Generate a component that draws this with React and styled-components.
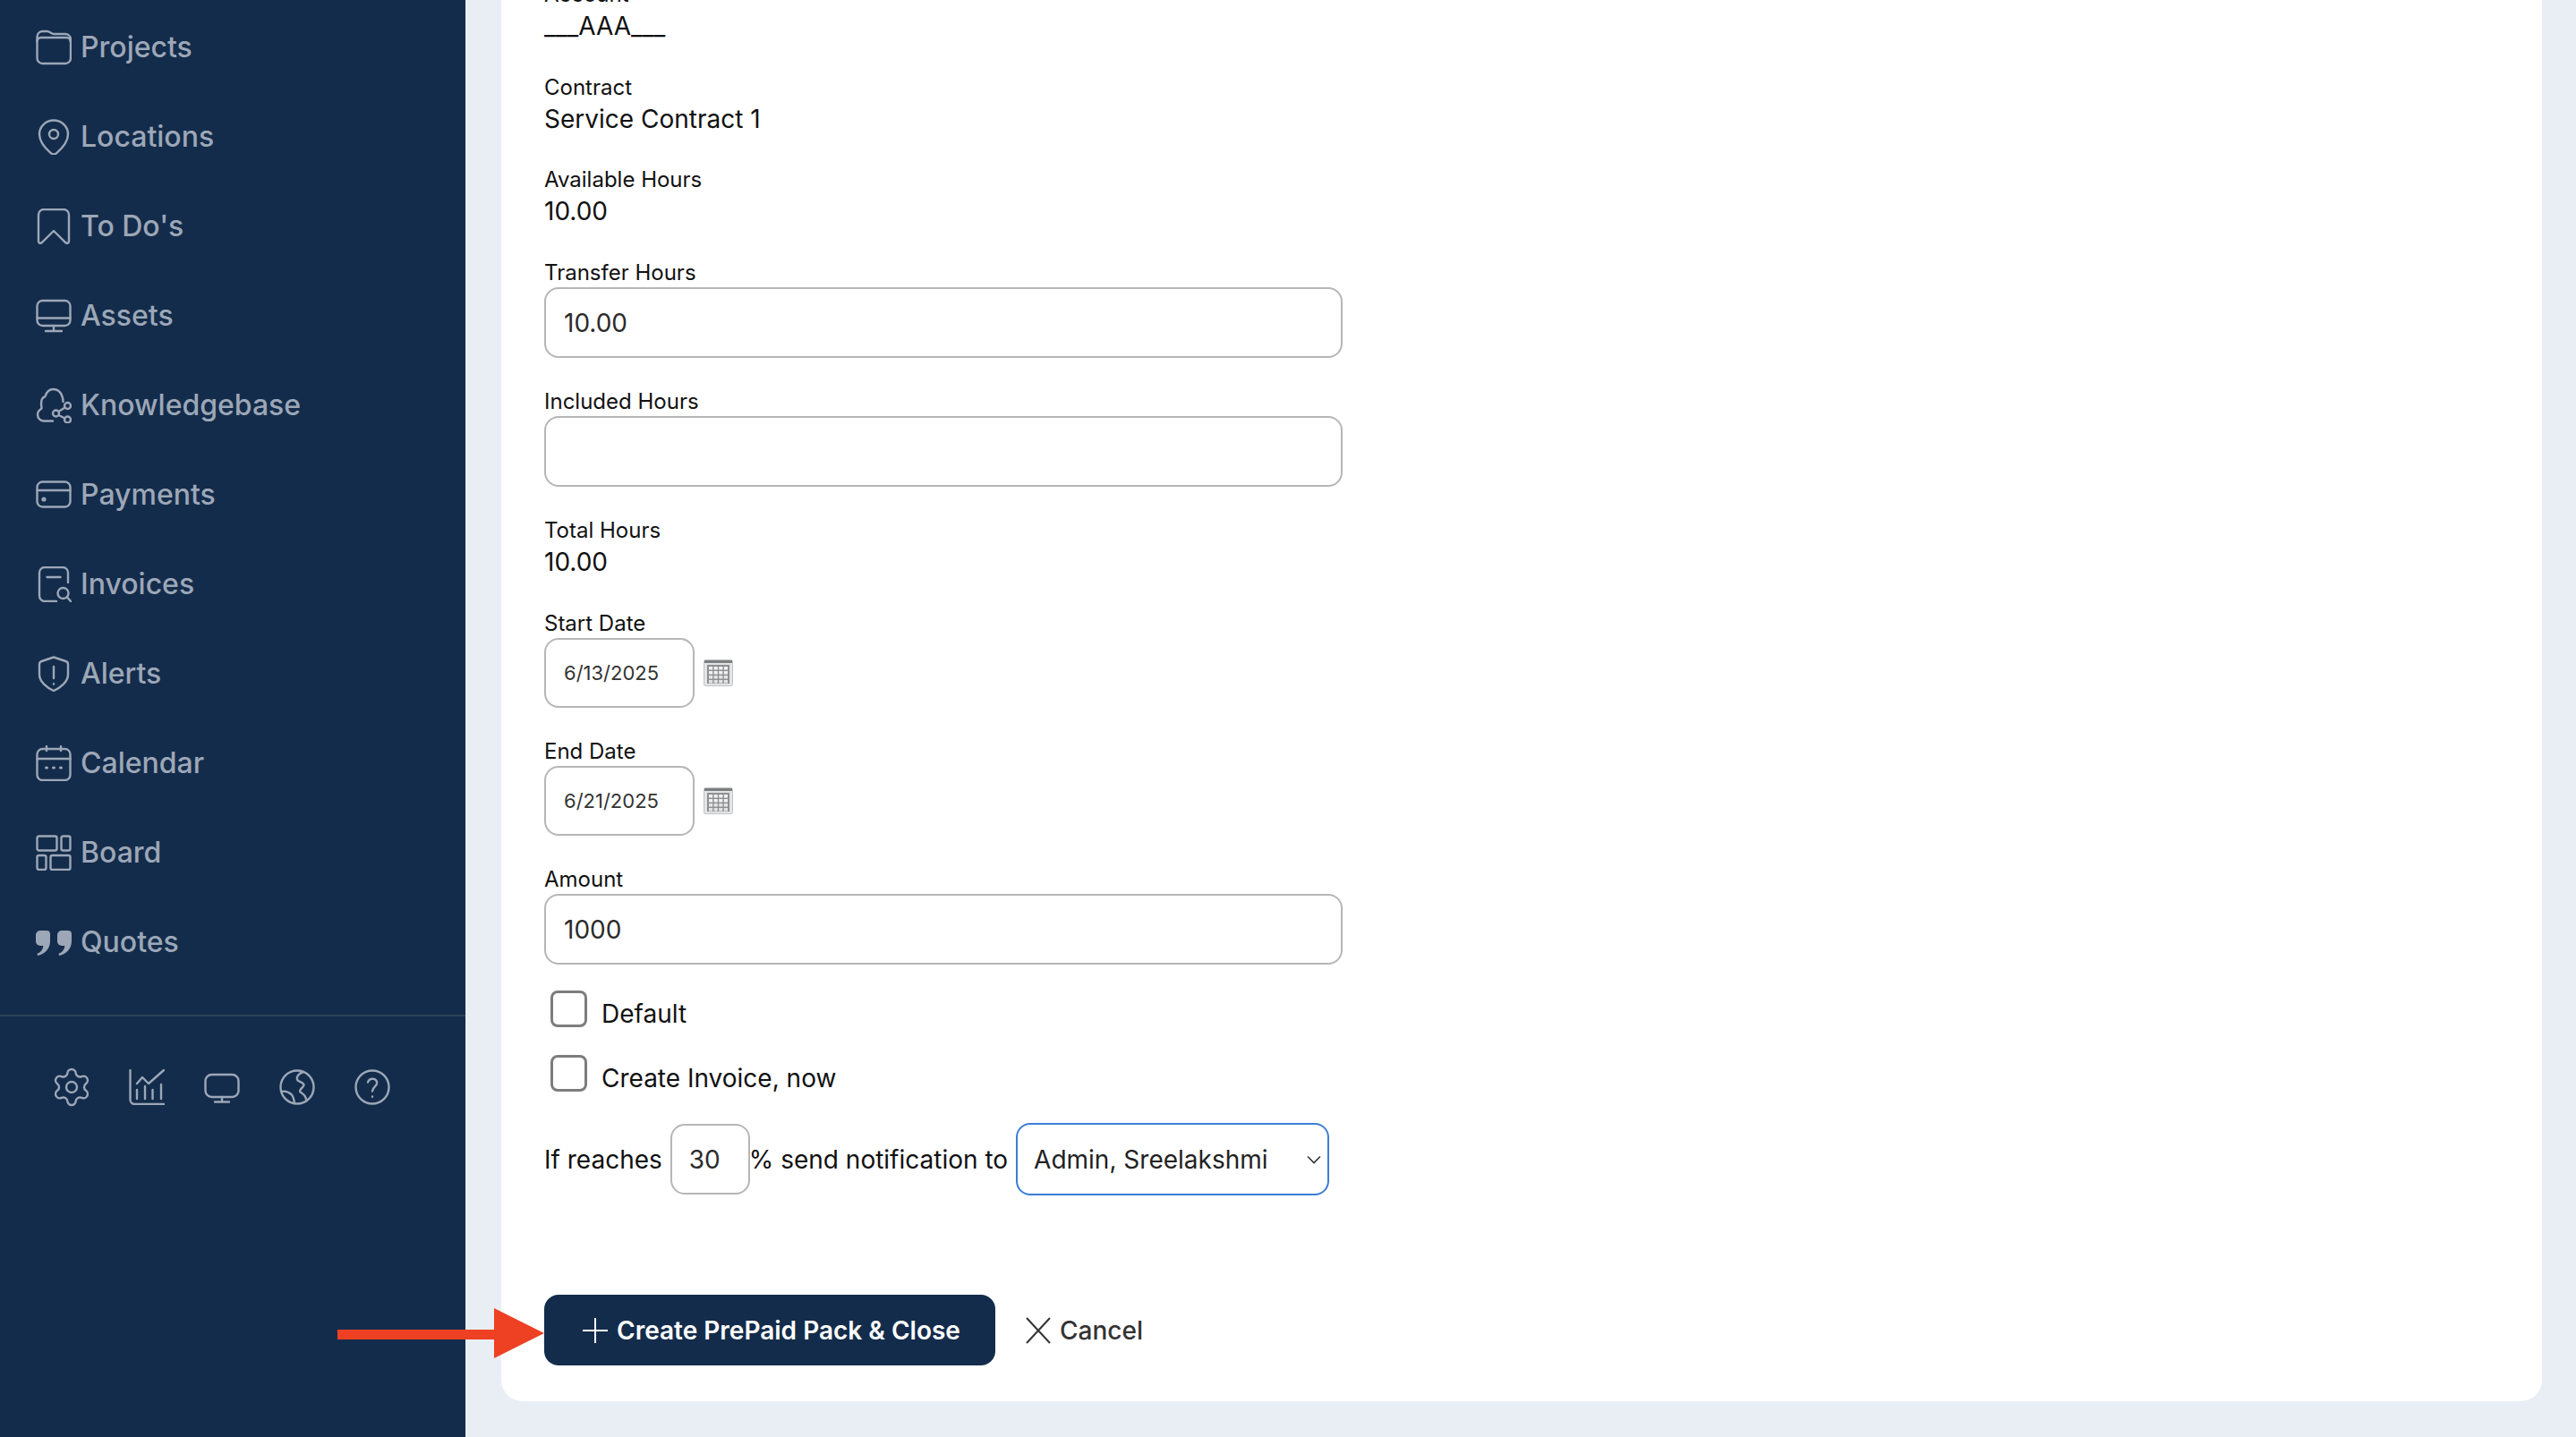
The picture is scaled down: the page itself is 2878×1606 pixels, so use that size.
import React from "react";
import styled, { createGlobalStyle } from "styled-components";
import { Settings } from "lucide-react";

const Global = createGlobalStyle`
  html, body { margin: 0; padding: 0; background: #e9eef5; }
  * { box-sizing: border-box; }
  body { font-family: Inter, "Liberation Sans", sans-serif; color: #111; }
`;

const Shell = styled.div`
  display: flex;
  height: 1606px;
  overflow: hidden;
  position: relative;
`;
const Sidebar = styled.aside`
  flex: 0 0 520px;
  background: #142c4b;
  color: #9ca7b7;
  padding-top: 3px;
`;
const NavList = styled.nav`
  display: flex;
  flex-direction: column;
  border-bottom: 2px solid #2a4159;
  padding-bottom: 31px;
`;
const NavItem = styled.a`
  display: flex;
  align-items: center;
  gap: 10px;
  height: 100px;
  padding-left: 40px;
  font-size: 32px;
  font-weight: 500;
  span { position: relative; top: -1px; }
`;
const IconSvg = styled.svg.attrs({ viewBox: "0 0 40 40", fill: "none" })`
  width: 40px;
  height: 40px;
  flex: none;
  stroke: currentColor;
  stroke-width: 2.4;
  stroke-linecap: round;
  stroke-linejoin: round;
`;
const GearIcon = styled(Settings)`
  margin: -4px;
  flex: none;
`;
const ToolBar = styled.div`
  display: flex;
  gap: 44px;
  padding: 59px 0 0 60px;
`;
const Main = styled.main`
  flex: 1;
  min-width: 0;
  display: flex;
  flex-direction: column;
  justify-content: flex-end;
  padding: 0 38px 40px 40px;
`;
const Card = styled.section`
  flex: none;
  background: #fff;
  border-radius: 0 0 24px 24px;
  padding: 0 48px 40px;
`;
const Field = styled.div`
  margin-bottom: ${(p) => p.$gap ?? 32}px;
`;
const Label = styled.label`
  display: block;
  height: 32px;
  line-height: 33px;
  font-size: 24px;
  margin-bottom: ${(p) => (p.$control ? 1 : 0)}px;
`;
const Value = styled.div`
  height: 40px;
  line-height: 41px;
  font-size: 28px;
`;
const TextInput = styled.input`
  display: block;
  width: 892px;
  height: 79px;
  padding: 0 20px;
  border: 2px solid #b6b6b6;
  border-radius: 16px;
  background: #fff;
  font: 400 28px Inter, sans-serif;
  color: #2b2b2b;
  outline: none;
`;
const DateRow = styled.div`
  display: flex;
  align-items: center;
  gap: 10px;
`;
const DateInput = styled(TextInput)`
  width: 168px;
  height: 78px;
  font-size: 22px;
  color: #333;
`;
const CalendarSvg = styled.svg.attrs({ viewBox: "0 0 33 30" })`
  width: 33px;
  height: 30px;
  flex: none;
`;
const CheckRow = styled.label`
  display: flex;
  align-items: center;
  gap: 16px;
  height: 41px;
  padding-left: 7px;
  margin-top: ${(p) => p.$top}px;
  font-size: 28px;
  span { padding-top: 11px; }
`;
const Check = styled.input.attrs({ type: "checkbox" })`
  appearance: none;
  margin: 0;
  width: 41px;
  height: 41px;
  border: 3px solid #7d7d7d;
  border-radius: 8px;
  background: #fff;
`;
const NotifyRow = styled.div`
  display: flex;
  align-items: center;
  gap: 9px;
  margin-top: 35px;
  font-size: 28px;
  height: 81px;
`;
const NumInput = styled(TextInput)`
  width: 89px;
  padding: 0 19px;
  margin-right: -10px;
`;
const SelectWrap = styled.div`
  position: relative;
  width: 350px;
  height: 81px;
`;
const Select = styled.select`
  appearance: none;
  width: 100%;
  height: 100%;
  border: 2.5px solid #3b7dd8;
  border-radius: 16px;
  padding: 0 40px 0 18px;
  background: #fff;
  font: 400 28px Inter, sans-serif;
  color: #222;
  outline: none;
`;
const Chevron = styled.svg.attrs({ viewBox: "0 0 16 10", fill: "none" })`
  position: absolute;
  right: 9px;
  top: 36px;
  width: 16px;
  height: 10px;
  stroke: #333;
  stroke-width: 1.6;
`;
const Actions = styled.div`
  display: flex;
  align-items: center;
  gap: 33px;
  margin-top: 111px;
`;
const PrimaryButton = styled.button`
  display: flex;
  align-items: center;
  gap: 9px;
  width: 504px;
  height: 79px;
  padding: 0 0 0 42px;
  border: 0;
  border-radius: 16px;
  background: #142c4b;
  color: #fff;
  font: 570 28px Inter, sans-serif;
`;
const GhostButton = styled.button`
  display: flex;
  align-items: center;
  gap: 9px;
  padding: 0;
  border: 0;
  background: none;
  color: #333;
  font: 500 28px Inter, sans-serif;
`;
const ThinSvg = styled.svg.attrs({ viewBox: "0 0 30 30", fill: "none" })`
  width: 30px;
  height: 30px;
  flex: none;
  stroke: currentColor;
  stroke-width: 2;
`;
const ArrowSvg = styled.svg.attrs({ viewBox: "0 0 231 56" })`
  position: absolute;
  left: 377px;
  top: 1462px;
  width: 231px;
  height: 56px;
`;

const icons = {
  folder: (
    <>
      <path d="M1.5 32V8a6 6 0 0 1 6-6h5c3.500 0 4.500 3 7.500 3h13a6 6 0 0 1 6 6v21a6 6 0 0 1-6 6H7.500a6 6 0 0 1-6-6z" />
      <path d="M1.500 13a4 4 0 0 1 4-4h29a4 4 0 0 1 4 4" />
    </>
  ),
  pin: (
    <>
      <path d="M20 1.500c9 0 16 7 16 15.500 0 8-7 16-12.500 20.800a5 5 0 0 1-7 0C11 33 4 25 4 17 4 8.500 11 1.500 20 1.500z" />
      <circle cx="20" cy="17" r="5" />
    </>
  ),
  bookmark: <path d="M3 7a6 6 0 0 1 6-6h22a6 6 0 0 1 6 6v29.500c0 2-2 3-3.500 1.800L20 25 6.500 38.300C5 39.500 3 38.500 3 36.500z" />,
  monitor: (
    <>
      <rect x="1.500" y="3" width="37" height="28" rx="6" />
      <path d="M1.500 22.500h37M20 31v6M11 37h18" />
    </>
  ),
  knowledge: (
    <>
      <path d="M19 37.500H9.500C5 37.500 2 34 2 30.500c0-3.500 2-5.500 4.500-7C6 21 5.500 18 6.500 14c.8-2.500 2.500-3.500 4-4C12 5 15 2 19.500 2c5.500 0 8.500 3.500 10 8 1 3 1 4.500 1 6" />
      <circle cx="22.500" cy="29" r="3.500" />
      <circle cx="35.500" cy="20.500" r="3.500" />
      <circle cx="35.500" cy="36" r="3.500" />
      <path d="M25.500 27l7-4.500M25.500 31l7 3.500" />
    </>
  ),
  card: (
    <>
      <rect x="1.500" y="5.500" width="37" height="28" rx="6" />
      <path d="M1.500 15h37" />
      <circle cx="9" cy="25" r="1.400" />
    </>
  ),
  invoice: (
    <>
      <path d="M36 18V7a6 6 0 0 0-6-6H10a6 6 0 0 0-6 6v26a6 6 0 0 0 6 6h13" />
      <path d="M12.500 12h15" />
      <circle cx="30.500" cy="30" r="6" />
      <path d="M35 34.500l4.500 5" />
    </>
  ),
  shield: (
    <>
      <path d="M20 1.500l13.500 4.500c1.500.5 2.500 2 2.500 3.500V21c0 8-9 15-16 18-7-3-16-10-16-18V9.500C4 8 5 6.500 6.500 6z" />
      <path d="M20 12v13M20 31.200v.3" />
    </>
  ),
  calendar: (
    <>
      <rect x="1.500" y="4" width="37" height="35" rx="6" />
      <path d="M1.500 15h37M12 1v5M28 1v5" />
      <path d="M11.500 25h1M19.500 25h1M27.500 25h1" strokeWidth="3" />
    </>
  ),
  board: (
    <>
      <rect x="1.500" y="1.500" width="22" height="16" rx="2" />
      <rect x="28.500" y="1.500" width="10" height="16" rx="2" />
      <rect x="1.500" y="23" width="10" height="16" rx="2" />
      <rect x="16.500" y="23" width="22" height="16" rx="2" />
    </>
  ),
  quotes: (
    <path
      stroke="none"
      fill="currentColor"
      d="M5 7h7a4 4 0 0 1 4 4v8c0 8-6 14.500-14 16l-.5-2.200c4-1.500 6.500-4.500 6.800-8.800H5a5 5 0 0 1-5-5v-7a5 5 0 0 1 5-5zM29 7h7a4 4 0 0 1 4 4v8c0 8-6 14.500-14 16l-.5-2.200c4-1.500 6.500-4.500 6.800-8.800H29a5 5 0 0 1-5-5v-7a5 5 0 0 1 5-5z"
    />
  ),
  chart: (
    <>
      <path d="M1.500 1v33a5 5 0 0 0 5 5h32.500" />
      <path d="M9 16l6-7 7 7 17-15" />
      <path d="M9 23v10M18 19v14M26.500 23v10M36 17v16" />
    </>
  ),
  screen: (
    <>
      <rect x="1.500" y="6" width="37" height="25" rx="7" />
      <path d="M20 31v5M12 36.500h16" />
    </>
  ),
  globe: (
    <>
      <circle cx="20" cy="20" r="18.500" />
      <path d="M2.500 25c4-1 8 .5 11 3 2.500 2.500 3 6 3.500 10" />
      <path d="M27 3c-5 1.500-8 5-7 8.500 1 3 7 2.500 7.500 6 .3 2.500-4.500 4-4.500 7 0 2 6 2.500 7 9" />
    </>
  ),
  help: (
    <>
      <circle cx="20" cy="20" r="18.500" />
      <path d="M15 14.500c.8-2.700 3-4 5.500-3.800 3 .3 4.800 2.300 4.600 5-.2 3.500-4.800 4-5.100 8.800" />
      <path d="M20 30.500v.3" />
    </>
  ),
};

const Icon = ({ name }) => <IconSvg>{icons[name]}</IconSvg>;

const CalendarIcon = () => {
  const cells = [];
  for (let r = 0; r < 4; r++) {
    for (let c = 0; c < 4; c++) {
      cells.push(
        <rect key={`${r}-${c}`} x={6 + c * 5.6} y={8 + r * 5} width="4.200" height="3.600" fill={r < 2 ? "#f1f1f1" : "#e3e3e3"} />
      );
    }
  }
  return (
    <CalendarSvg>
      <rect x="0.500" y="0.500" width="32" height="29" rx="2" fill="#e2e4e5" stroke="#c2c4c5" />
      <rect x="1" y="1" width="31" height="3" fill="#7c7e80" />
      <rect x="4" y="6" width="25" height="21" fill="#8d8f91" />
      {cells}
    </CalendarSvg>
  );
};

const nav = [
  ["folder", "Projects"],
  ["pin", "Locations"],
  ["bookmark", "To Do's"],
  ["monitor", "Assets"],
  ["knowledge", "Knowledgebase"],
  ["card", "Payments"],
  ["invoice", "Invoices"],
  ["shield", "Alerts"],
  ["calendar", "Calendar"],
  ["board", "Board"],
  ["quotes", "Quotes"],
];

const ReadOnly = ({ label, value, gap }) => (
  <Field $gap={gap}>
    <Label>{label}</Label>
    <Value>{value}</Value>
  </Field>
);

export default function App() {
  return (
    <Shell>
      <Global />
      <Sidebar>
        <NavList>
          {nav.map(([icon, label]) => (
            <NavItem key={label}>
              <Icon name={icon} />
              <span>{label}</span>
            </NavItem>
          ))}
        </NavList>
        <ToolBar>
          <GearIcon size={48} strokeWidth={1.2} />
          <Icon name="chart" />
          <Icon name="screen" />
          <Icon name="globe" />
          <Icon name="help" />
        </ToolBar>
      </Sidebar>
      <Main>
        <Card>
          <ReadOnly label="Account" value="___AAA___" />
          <ReadOnly label="Contract" value="Service Contract 1" gap={31} />
          <ReadOnly label="Available Hours" value="10.00" />
          <Field>
            <Label $control>Transfer Hours</Label>
            <TextInput defaultValue="10.00" />
          </Field>
          <Field>
            <Label $control>Included Hours</Label>
            <TextInput />
          </Field>
          <ReadOnly label="Total Hours" value="10.00" />
          <Field>
            <Label $control>Start Date</Label>
            <DateRow>
              <DateInput defaultValue="6/13/2025" />
              <CalendarIcon />
            </DateRow>
          </Field>
          <Field>
            <Label $control>End Date</Label>
            <DateRow>
              <DateInput defaultValue="6/21/2025" />
              <CalendarIcon />
            </DateRow>
          </Field>
          <Field $gap={0}>
            <Label $control>Amount</Label>
            <TextInput defaultValue="1000" />
          </Field>
          <CheckRow $top={29}>
            <Check />
            <span>Default</span>
          </CheckRow>
          <CheckRow $top={31}>
            <Check />
            <span>Create Invoice, now</span>
          </CheckRow>
          <NotifyRow>
            <span>If reaches</span>
            <NumInput defaultValue="30" />
            <span>% send notification to</span>
            <SelectWrap>
              <Select defaultValue="admin">
                <option value="admin">Admin, Sreelakshmi</option>
              </Select>
              <Chevron>
                <path d="M1 1.500l7 7 7-7" />
              </Chevron>
            </SelectWrap>
          </NotifyRow>
          <Actions>
            <PrimaryButton>
              <ThinSvg>
                <path d="M15 1v28M1 15h28" />
              </ThinSvg>
              Create PrePaid Pack &amp; Close
            </PrimaryButton>
            <GhostButton>
              <ThinSvg>
                <path d="M2 1l26 28M28 1L2 29" />
              </ThinSvg>
              Cancel
            </GhostButton>
          </Actions>
        </Card>
      </Main>
      <ArrowSvg>
        <path fill="#ee4023" d="M0 24h175V0l56 28-56 28V35H0z" />
      </ArrowSvg>
    </Shell>
  );
}
